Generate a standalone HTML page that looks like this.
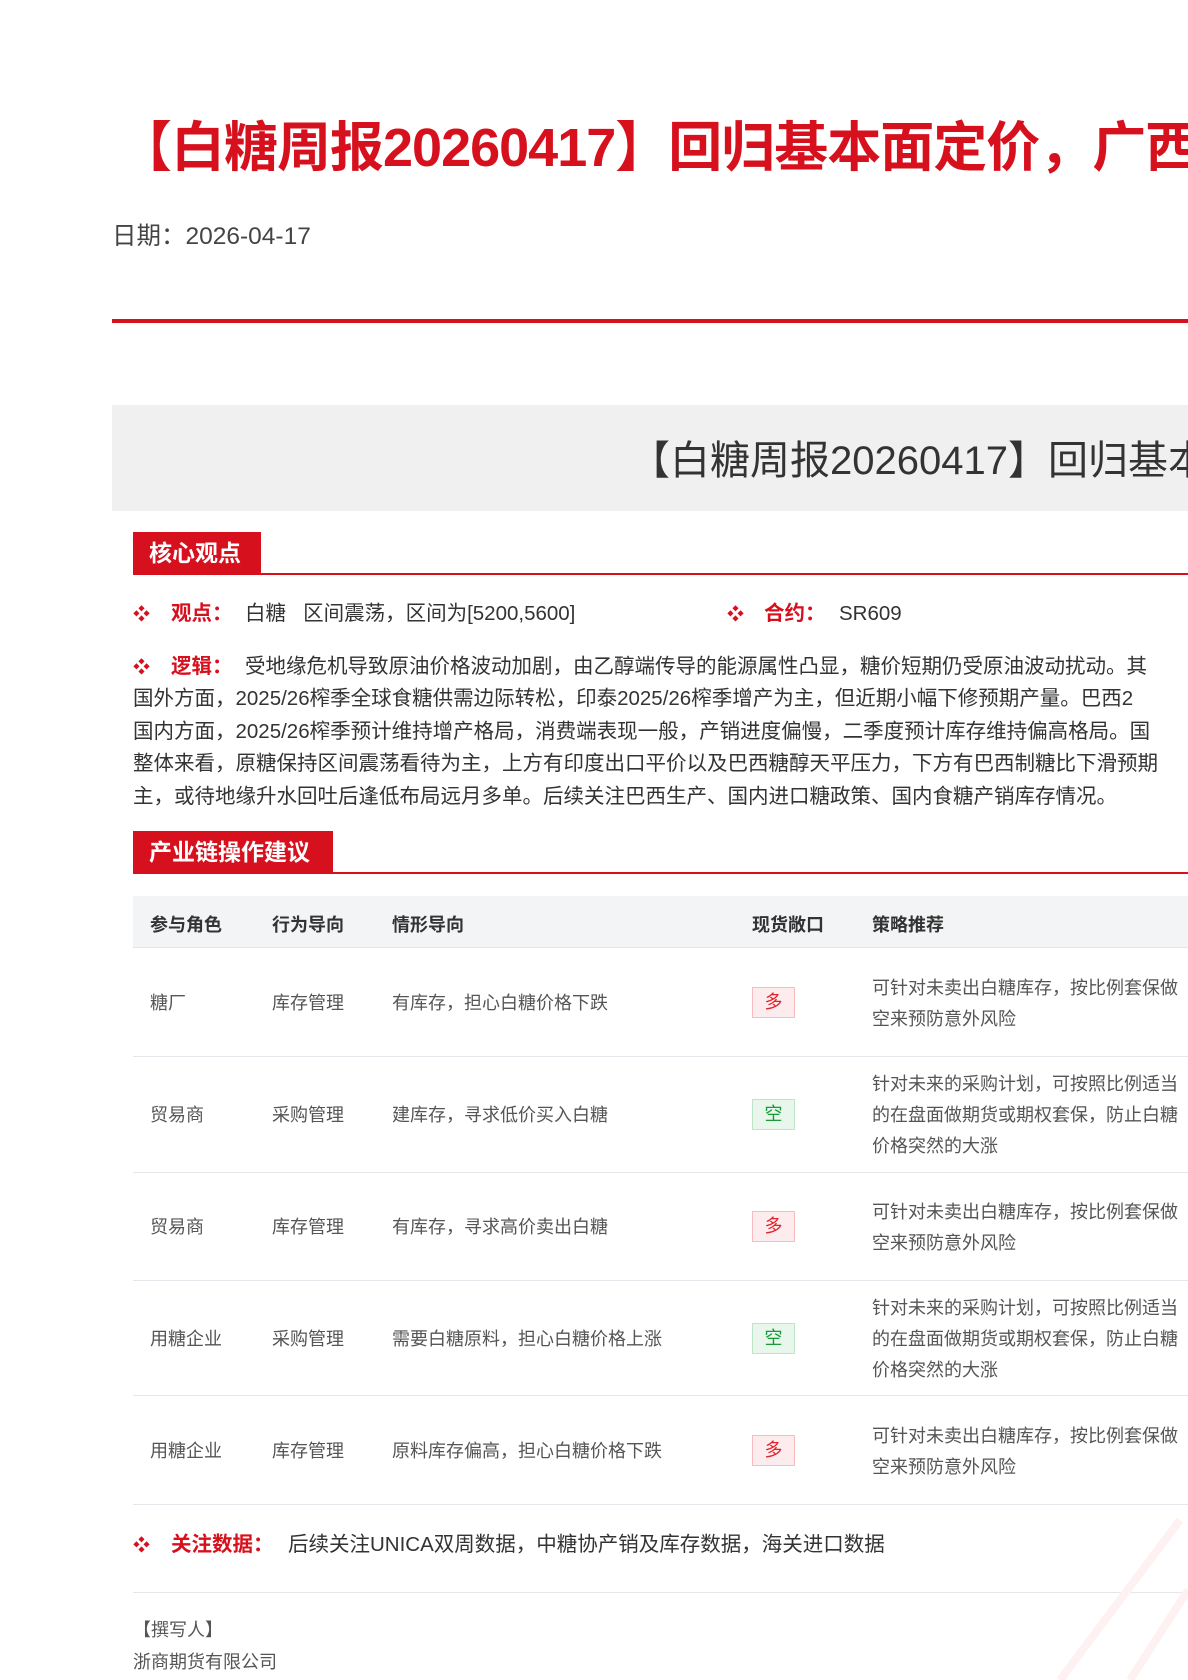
<!DOCTYPE html>
<html><head><meta charset="utf-8"><style>
*{margin:0;padding:0;box-sizing:border-box}
html,body{width:1188px;height:1680px;overflow:hidden;background:#fff}
body{position:relative;font-family:"Liberation Sans","Noto Sans CJK SC",sans-serif;color:#333}
.a{position:absolute;white-space:nowrap}
.t{left:118px;top:114px;font-size:54px;font-weight:bold;color:#d7101e;line-height:68px;letter-spacing:-1px}
.date{left:112px;top:223px;font-size:24.5px;color:#444;line-height:28px}
.rl{left:112px;top:319px;width:1100px;height:4px;background:#d7101e}
.gb{left:112px;top:405px;width:1100px;height:106px;background:#f0f0f0}
.gt{left:630px;top:436px;font-size:40px;color:#333;line-height:50px}
.tab{height:42px;background:#d7101e;color:#fff;font-size:23px;font-weight:bold;line-height:42px;padding-left:16px}
.ul{left:133px;width:1100px;height:2px;background:#d7101e}
.b{color:#d7101e;font-size:17px}
.lab{color:#d7101e;font-weight:bold}
.p{font-size:20.5px;color:#333;line-height:32.5px}
.th{left:133px;top:896px;width:1100px;height:52px;background:#f3f4f6;border-bottom:1px solid #e3e6ea}
.hd{font-size:18px;font-weight:bold;color:#333;top:911px}
.row{left:133px;width:1100px;border-bottom:1px solid #e3e6ea}
.c{font-size:18px;color:#555;line-height:31px}
.tg{width:43px;height:31px;font-size:18px;line-height:29px;text-align:center;border:1px solid}
.r{color:#e0222b;background:#fdeced;border-color:#f6bcbf}
.g{color:#1a9a3a;background:#e9f6ec;border-color:#bfe4c7}
</style></head><body>
<div class="a t">【白糖周报20260417】回归基本面定价，广西</div>
<div class="a date">日期：2026-04-17</div>
<div class="a rl"></div>
<div class="a gb"></div>
<div class="a gt">【白糖周报20260417】回归基本面定价</div>

<div class="a tab" style="left:133px;top:532px;width:128px">核心观点</div>
<div class="a ul" style="top:573px"></div>

<div class="a p" style="left:133px;top:598px"><span class="b">❖</span></div>
<div class="a p" style="left:171px;top:598px"><span class="lab">观点：</span></div>
<div class="a p" style="left:245px;top:598px">白糖&nbsp;&nbsp;&nbsp;区间震荡，区间为[5200,5600]</div>
<div class="a p" style="left:727px;top:598px"><span class="b">❖</span></div>
<div class="a p" style="left:764px;top:598px"><span class="lab">合约：</span></div>
<div class="a p" style="left:839px;top:598px">SR609</div>

<div class="a p" style="left:133px;top:651px"><span class="b">❖</span></div>
<div class="a p" style="left:171px;top:651px"><span class="lab">逻辑：</span></div>
<div class="a p" style="left:245px;top:651px">受地缘危机导致原油价格波动加剧，由乙醇端传导的能源属性凸显，糖价短期仍受原油波动扰动。其</div>
<div class="a p" style="left:133px;top:683px">国外方面，2025/26榨季全球食糖供需边际转松，印泰2025/26榨季增产为主，但近期小幅下修预期产量。巴西2</div>
<div class="a p" style="left:133px;top:716px">国内方面，2025/26榨季预计维持增产格局，消费端表现一般，产销进度偏慢，二季度预计库存维持偏高格局。国</div>
<div class="a p" style="left:133px;top:748px">整体来看，原糖保持区间震荡看待为主，上方有印度出口平价以及巴西糖醇天平压力，下方有巴西制糖比下滑预期</div>
<div class="a p" style="left:133px;top:781px">主，或待地缘升水回吐后逢低布局远月多单。后续关注巴西生产、国内进口糖政策、国内食糖产销库存情况。</div>

<div class="a tab" style="left:133px;top:831px;width:200px">产业链操作建议</div>
<div class="a ul" style="top:872px"></div>

<div class="a th"></div>
<div class="a hd" style="left:150px">参与角色</div>
<div class="a hd" style="left:272px">行为导向</div>
<div class="a hd" style="left:392px">情形导向</div>
<div class="a hd" style="left:752px">现货敞口</div>
<div class="a hd" style="left:872px">策略推荐</div>

<div class="a row" style="top:948px;height:109px"></div>
<div class="a c" style="left:150px;top:988px">糖厂</div><div class="a c" style="left:272px;top:988px">库存管理</div><div class="a c" style="left:392px;top:988px">有库存，担心白糖价格下跌</div>
<div class="a tg r" style="left:752px;top:987px">多</div>
<div class="a c" style="left:872px;top:973px">可针对未卖出白糖库存，按比例套保做<br>空来预防意外风险</div>

<div class="a row" style="top:1057px;height:116px"></div>
<div class="a c" style="left:150px;top:1100px">贸易商</div><div class="a c" style="left:272px;top:1100px">采购管理</div><div class="a c" style="left:392px;top:1100px">建库存，寻求低价买入白糖</div>
<div class="a tg g" style="left:752px;top:1099px">空</div>
<div class="a c" style="left:872px;top:1069px">针对未来的采购计划，可按照比例适当<br>的在盘面做期货或期权套保，防止白糖<br>价格突然的大涨</div>

<div class="a row" style="top:1173px;height:108px"></div>
<div class="a c" style="left:150px;top:1212px">贸易商</div><div class="a c" style="left:272px;top:1212px">库存管理</div><div class="a c" style="left:392px;top:1212px">有库存，寻求高价卖出白糖</div>
<div class="a tg r" style="left:752px;top:1211px">多</div>
<div class="a c" style="left:872px;top:1197px">可针对未卖出白糖库存，按比例套保做<br>空来预防意外风险</div>

<div class="a row" style="top:1281px;height:115px"></div>
<div class="a c" style="left:150px;top:1324px">用糖企业</div><div class="a c" style="left:272px;top:1324px">采购管理</div><div class="a c" style="left:392px;top:1324px">需要白糖原料，担心白糖价格上涨</div>
<div class="a tg g" style="left:752px;top:1323px">空</div>
<div class="a c" style="left:872px;top:1293px">针对未来的采购计划，可按照比例适当<br>的在盘面做期货或期权套保，防止白糖<br>价格突然的大涨</div>

<div class="a row" style="top:1396px;height:109px"></div>
<div class="a c" style="left:150px;top:1436px">用糖企业</div><div class="a c" style="left:272px;top:1436px">库存管理</div><div class="a c" style="left:392px;top:1436px">原料库存偏高，担心白糖价格下跌</div>
<div class="a tg r" style="left:752px;top:1435px">多</div>
<div class="a c" style="left:872px;top:1421px">可针对未卖出白糖库存，按比例套保做<br>空来预防意外风险</div>

<div class="a p" style="left:133px;top:1529px"><span class="b">❖</span></div>
<div class="a p" style="left:171px;top:1529px"><span class="lab">关注数据：</span></div>
<div class="a p" style="left:288px;top:1529px">后续关注UNICA双周数据，中糖协产销及库存数据，海关进口数据</div>
<div class="a" style="left:133px;top:1592px;width:1100px;height:1px;background:#e3e6ea"></div>
<div class="a c" style="left:133px;top:1615px">【撰写人】</div>
<div class="a c" style="left:133px;top:1647px">浙商期货有限公司</div>
<svg class="a" style="left:980px;top:1500px" width="208" height="180"><path d="M200 20 L80 180 M208 90 L150 180" stroke="#fdf1f2" stroke-width="8" fill="none"/></svg>
</body></html>
